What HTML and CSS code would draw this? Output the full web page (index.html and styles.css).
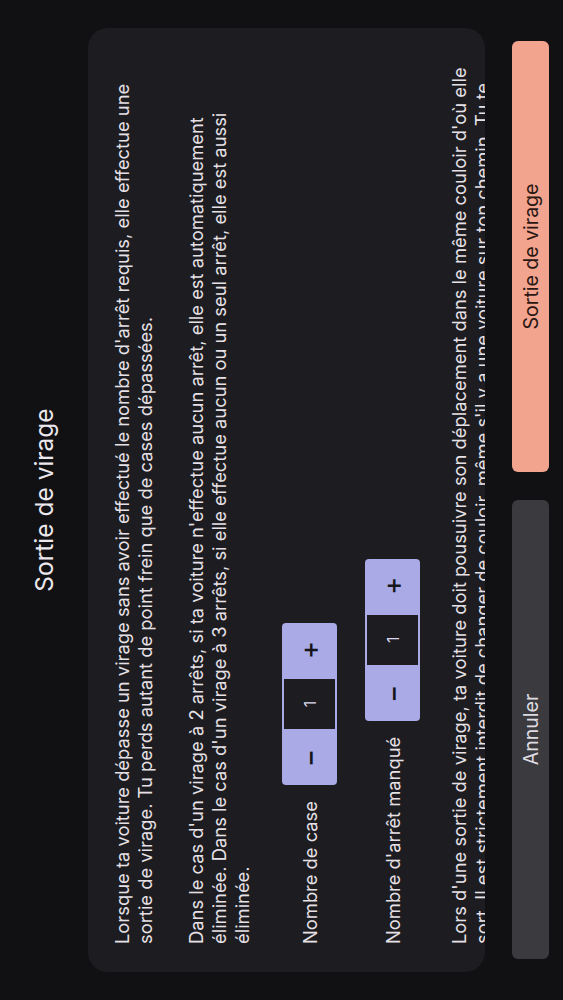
FILE: index.html
```html
<!DOCTYPE html>
<html lang="fr">

<head>
    <meta charset="UTF-8">
    <meta name="viewport" content="width=device-width, initial-scale=1.0">
    <title>Sortie de virage</title>
    <link rel="stylesheet" href="styles.css">
</head>

<body>
    <!-- the app runs in landscape, the whole screen is turned a quarter -->
    <div class="screen">
        <h1 class="title">Sortie de virage</h1>

        <div class="card">
            <p>Lorsque ta voiture dépasse un virage sans avoir effectué le nombre d'arrêt requis, elle effectue une sortie de virage. Tu perds autant de point frein que de cases dépassées.</p>
            <p>Dans le cas d'un virage à 2 arrêts, si ta voiture n'effectue aucun arrêt, elle est automatiquement éliminée. Dans le cas d'un virage à 3 arrêts, si elle effectue aucun ou un seul arrêt, elle est aussi éliminée.</p>

            <div class="field">
                <span class="field-label">Nombre de case</span>
                <div class="stepper">
                    <button class="step-btn">&minus;</button>
                    <span class="step-value">1</span>
                    <button class="step-btn">+</button>
                </div>
            </div>

            <div class="field">
                <span class="field-label">Nombre d'arrêt manqué</span>
                <div class="stepper">
                    <button class="step-btn">&minus;</button>
                    <span class="step-value">1</span>
                    <button class="step-btn">+</button>
                </div>
            </div>

            <p>Lors d'une sortie de virage, ta voiture doit pousuivre son déplacement dans le même couloir d'où elle sort. Il est strictement interdit de changer de couloir, même s'il y a une voiture sur ton chemin. Tu te retrouves alors bloqué derrière elle jusqu'au prochain tour.</p>
        </div>

        <div class="actions">
            <button class="action-btn cancel">Annuler</button>
            <button class="action-btn confirm">Sortie de virage</button>
        </div>
    </div>
</body>

</html>
```

FILE: styles.css
```css
html {
    overflow: hidden;
    background-color: #111013;
}

body {
    margin: 0;
    width: 563px;
    height: 1000px;
    font-family: Inter, "Noto Sans", sans-serif;
    color: #e6e1e6;
}

.screen {
    width: 1000px;
    height: 563px;
    box-sizing: border-box;
    padding: 0 28px;
    display: flex;
    flex-direction: column;
    transform-origin: top left;
    transform: translateY(1000px) rotate(-90deg);
}

.title {
    height: 88px;
    margin: 0;
    flex-shrink: 0;
    display: flex;
    align-items: center;
    justify-content: center;
    font-size: 24.5px;
    font-weight: 400;
    color: #ece8ee;
}

.card {
    height: 397px;
    box-sizing: border-box;
    padding: 23px 28px 0;
    background-color: #1d1c20;
    border-radius: 20px;
    overflow: hidden;
    display: flex;
    flex-direction: column;
    gap: 28px;
    flex-shrink: 0;
}

.card p {
    margin: 0;
    font-size: 18.35px;
    line-height: 23px;
}

.field {
    display: flex;
    align-items: center;
    gap: 16px;
}

.field-label {
    font-size: 18.35px;
}

.stepper {
    display: flex;
    height: 55px;
    border-radius: 4px;
    overflow: hidden;
}

.step-btn {
    width: 54px;
    height: 55px;
    border: none;
    padding: 0;
    background-color: #a9aae6;
    color: #16151c;
    font-family: Inter, sans-serif;
    font-size: 27px;
    font-weight: 500;
    line-height: 1;
}

.step-value {
    width: 54px;
    box-sizing: border-box;
    border: 2px solid #a9aae6;
    background-color: #1d1c20;
    color: #dcdaf0;
    display: flex;
    align-items: center;
    justify-content: center;
    font-size: 16px;
}

.actions {
    margin-top: 27px;
    padding: 0 13px;
    display: grid;
    grid-template-columns: 459px 431px;
    gap: 28px;
}

.action-btn {
    height: 37px;
    border: none;
    border-radius: 6px;
    font-family: Inter, sans-serif;
    font-size: 19.5px;
}

.cancel {
    background-color: #3b3a3e;
    color: #dedbe1;
}

.confirm {
    background-color: #f2a48f;
    color: #2a1711;
}
```
